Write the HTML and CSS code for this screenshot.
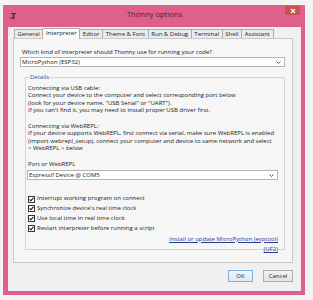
FILE: index.html
```html
<!DOCTYPE html>
<html>
<head>
<meta charset="utf-8">
<link rel="stylesheet" href="styles.css">
</head>
<body>
<div class="desk">
  <div class="window">
    <div class="titlebar">
      <svg class="appicon" width="7" height="8" viewBox="0 0 7 8">
        <path d="M1 1 h5 v1.3 h-1.6 v5 h-1.6 v-5 h-1.8 z" fill="#3a3a3a"/>
        <circle cx="1.5" cy="6" r="1" fill="#3a3a3a"/>
      </svg>
      <div class="title">Thonny options</div>
      <div class="close"><svg width="6" height="6" viewBox="0 0 6 6"><path d="M1 1 L5 5 M5 1 L1 5" stroke="#fff" stroke-width="1.2"/></svg></div>
    </div>
    <div class="content">
      <div class="tabs">
        <div class="tab">General</div>
        <div class="tab active">Interpreter</div>
        <div class="tab">Editor</div>
        <div class="tab">Theme &amp; Font</div>
        <div class="tab">Run &amp; Debug</div>
        <div class="tab">Terminal</div>
        <div class="tab">Shell</div>
        <div class="tab">Assistant</div>
      </div>
      <div class="panel">
        <div class="question">Which kind of interpreter should Thonny use for running your code?</div>
        <div class="combo combo-main">
          <span>MicroPython (ESP32)</span>
          <svg class="chev" width="5" height="3" viewBox="0 0 5 3"><path d="M0.5 0.5 L2.5 2.5 L4.5 0.5" stroke="#444" stroke-width="0.9" fill="none"/></svg>
        </div>
        <fieldset class="details">
          <legend>Details</legend>
          <p>Connecting via USB cable:<br>Connect your device to the computer and select corresponding port below<br>(look for your device name, "USB Serial" or "UART").<br>If you can't find it, you may need to install proper USB driver first.</p>
          <p>Connecting via WebREPL:<br>If your device supports WebREPL, first connect via serial, make sure WebREPL is enabled<br>(import webrepl_setup), connect your computer and device to same network and select<br>&lt; WebREPL &gt; below</p>
          <div class="portlabel">Port or WebREPL</div>
          <div class="combo combo-port">
            <span>Espressif Device @ COM5</span>
            <svg class="chev" width="5" height="3" viewBox="0 0 5 3"><path d="M0.5 0.5 L2.5 2.5 L4.5 0.5" stroke="#444" stroke-width="0.9" fill="none"/></svg>
          </div>
          <div class="checks">
            <div class="check"><svg class="box" width="7" height="7" viewBox="0 0 7 7"><rect x="0.5" y="0.5" width="6" height="6" fill="#fff" stroke="#333"/><path d="M1.6 3.4 L2.9 4.8 L5.4 1.9" stroke="#111" stroke-width="1.1" fill="none"/></svg><span>Interrupt working program on connect</span></div>
            <div class="check"><svg class="box" width="7" height="7" viewBox="0 0 7 7"><rect x="0.5" y="0.5" width="6" height="6" fill="#fff" stroke="#333"/><path d="M1.6 3.4 L2.9 4.8 L5.4 1.9" stroke="#111" stroke-width="1.1" fill="none"/></svg><span>Synchronize device's real time clock</span></div>
            <div class="check"><svg class="box" width="7" height="7" viewBox="0 0 7 7"><rect x="0.5" y="0.5" width="6" height="6" fill="#fff" stroke="#333"/><path d="M1.6 3.4 L2.9 4.8 L5.4 1.9" stroke="#111" stroke-width="1.1" fill="none"/></svg><span>Use local time in real time clock</span></div>
            <div class="check"><svg class="box" width="7" height="7" viewBox="0 0 7 7"><rect x="0.5" y="0.5" width="6" height="6" fill="#fff" stroke="#333"/><path d="M1.6 3.4 L2.9 4.8 L5.4 1.9" stroke="#111" stroke-width="1.1" fill="none"/></svg><span>Restart interpreter before running a script</span></div>
          </div>
          <div class="links">
            <a class="link">Install or update MicroPython (esptool)</a>
            <a class="link">(UF2)</a>
          </div>
        </fieldset>
      </div>
      <div class="buttons">
        <div class="btn btn-ok">OK</div>
        <div class="btn btn-cancel">Cancel</div>
      </div>
    </div>
  </div>
</div>
</body>
</html>
```

FILE: styles.css
```css
html, body {
  margin: 0;
  padding: 0;
}
body {
  width: 313px;
  height: 300px;
  overflow: hidden;
  background: #f4f4f4;
  font-family: "Open Sans", "Noto Sans", sans-serif;
  font-size: 6px;
  color: #222;
}
.desk {
  padding: 5px 0 0 3px;
}
.window {
  width: 302px;
  height: 290px;
  box-sizing: border-box;
  background: #e0608c;
  padding: 0 4px 4px 5px;
  display: flex;
  flex-direction: column;
}
.titlebar {
  height: 22px;
  display: grid;
  grid-template-columns: 1fr auto 1fr;
  align-items: center;
}
.appicon {
  margin-left: 2px;
  margin-top: -1px;
}
.title {
  font-size: 7.6px;
  color: #3b2a30;
  margin-top: -4px;
}
.close {
  justify-self: end;
  align-self: start;
  margin-top: 1px;
  margin-right: 1px;
  width: 15px;
  height: 9px;
  background: #c9514f;
  display: flex;
  align-items: center;
  justify-content: center;
}
.content {
  flex: 1;
  background: #f0f0f0;
  padding: 2px 8px 0 5px;
  display: flex;
  flex-direction: column;
}
.tabs {
  display: flex;
  height: 9px;
  padding-left: 1px;
  align-items: flex-end;
}
.tab {
  height: 9px;
  box-sizing: border-box;
  border: 1px solid #acacac;
  border-bottom: none;
  margin-right: -1px;
  padding: 0 2.6px;
  background: #ececec;
  line-height: 8px;
  font-size: 6px;
  color: #222;
  white-space: nowrap;
}
.tab.active {
  height: 11px;
  margin-bottom: -1px;
  background: #fafafa;
  position: relative;
  z-index: 2;
  line-height: 9px;
}
.panel {
  height: 225px;
  box-sizing: border-box;
  border: 1px solid #c9c9c9;
  background: #f6f6f6;
  padding: 10px 7px 0 6px;
}
.question {
  line-height: 7.3px;
  padding-left: 2px;
  white-space: nowrap;
}
.combo {
  height: 10px;
  box-sizing: border-box;
  border: 1px solid #b5b5b5;
  background: #fff;
  display: flex;
  align-items: center;
  justify-content: space-between;
  padding: 0 3px 0 1px;
  margin-top: 1px;
  line-height: 8px;
  white-space: nowrap;
}
.chev {
  flex: none;
}
.details {
  margin: 6.5px 0 9px 5px;
  border: 1px solid #d5d5d5;
  padding: 4px 5px 0 2px;
  height: 176px;
  box-sizing: border-box;
}
.details legend {
  padding: 0 1px;
  margin-left: 1px;
  color: #1c4fa0;
  line-height: 7.3px;
}
.details p {
  margin: 0 0 8.7px 0;
  line-height: 7.33px;
  white-space: nowrap;
}
.portlabel {
  line-height: 7.3px;
  margin-top: 5px;
}
.combo-port {
  margin-left: -1px;
  margin-right: 1px;
  margin-top: 2px;
}
.checks {
  margin-top: 15px;
  display: flex;
  flex-direction: column;
  gap: 2.5px;
}
.check {
  display: flex;
  align-items: center;
  gap: 2px;
  height: 7.3px;
  line-height: 7.3px;
  white-space: nowrap;
}
.box {
  flex: none;
}
.links {
  margin-top: 3.5px;
  display: flex;
  flex-direction: column;
  align-items: flex-end;
  padding-right: 1px;
  gap: 2.7px;
}
.link {
  color: #2b3a92;
  text-decoration: underline;
  line-height: 7.3px;
}
.buttons {
  display: flex;
  justify-content: flex-end;
  gap: 10px;
  margin-top: 7px;
}
.btn {
  height: 12px;
  box-sizing: border-box;
  border: 1px solid #acacac;
  background: linear-gradient(#f2f2f2, #e4e4e4);
  display: flex;
  align-items: center;
  justify-content: center;
  font-size: 6px;
}
.btn-ok {
  width: 25px;
  border-color: #7fb1e0;
  background: linear-gradient(#eef5fc, #dde9f5);
}
.btn-cancel {
  width: 30px;
}
```
